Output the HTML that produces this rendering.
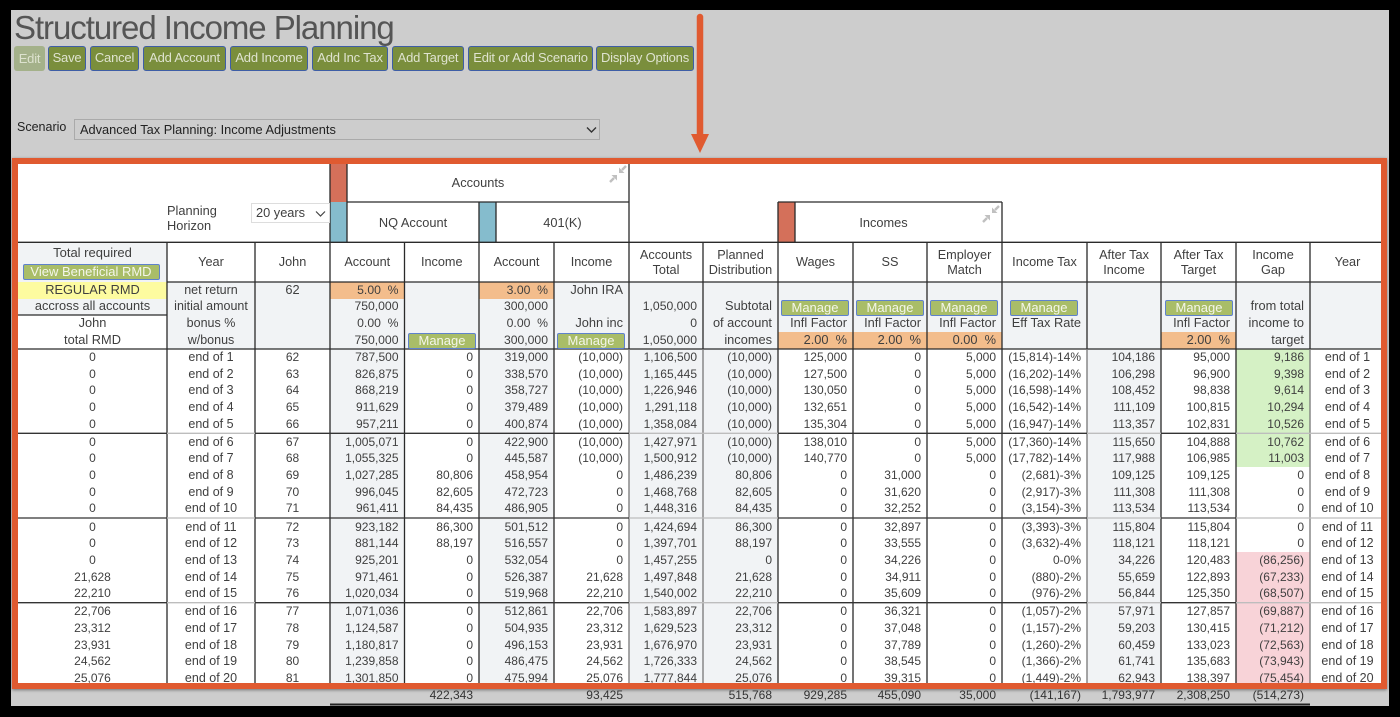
<!DOCTYPE html>
<html><head><meta charset="utf-8"><title>Structured Income Planning</title>
<style>
html,body{margin:0;padding:0;background:#000;width:1400px;height:717px;overflow:hidden}
body{font-family:"Liberation Sans",sans-serif;font-size:12px;color:#3f3f3f;position:relative}
div{box-sizing:border-box}
.a{position:absolute}
#g{position:absolute;left:11px;top:10px;width:1378px;height:696px;background:#cdcdcd}
h1{position:absolute;left:14px;top:10px;margin:0;font-weight:400;font-size:33px;line-height:36px;color:#555;letter-spacing:-1.06px;white-space:nowrap}
.b{position:absolute;top:46px;height:25px;background:#7a8e3c;border:1.5px solid #3e5ea6;border-radius:3px;color:#dfe3d0;font-size:13px;line-height:22px;text-align:center;white-space:nowrap;letter-spacing:-.2px}
.m{position:absolute;height:16px;background:#a9bd68;border:1.5px solid #5f82cc;border-radius:2px;color:#f4f6ea;font-size:13px;line-height:14px;text-align:center;width:68px;z-index:3}
.r{position:absolute;left:18px;width:1367px;height:17px;line-height:16.67px;display:grid;grid-template-columns:149px 88px 75px 74.5px 74.5px 75px 75px 74px 75px 75px 74px 75px 85px 74px 75px 74px 75px;z-index:2;white-space:pre}
.r i{font-style:normal;text-align:right;padding-right:6px;overflow:visible}
.r i:nth-child(1),.r i:nth-child(2),.r i:nth-child(3),.r i:nth-child(17){text-align:center;padding-right:0}
.r i:nth-child(2),.r i:nth-child(17){font-size:12.5px}
.h{top:243px;height:39px;line-height:15px;align-items:center}
.h i{text-align:center!important;padding:0!important;font-size:12.7px!important}
.d i{font-size:12.8px}
.d i:nth-child(4),.d i:nth-child(6),.d i:nth-child(8){font-size:12.2px}
.bg{position:absolute;background:#f1f3f5}
.o{position:absolute;background:#f3bd8c}
.t{position:absolute;text-align:center;z-index:2;font-size:12.8px}
</style></head><body>
<div id="g"></div>
<h1>Structured Income Planning</h1>
<div class="b" style="left:14px;width:31px;background:#a4b18a;border:0;color:#dde2cf;line-height:25px">Edit</div>
<div class="b" style="left:48px;width:38px">Save</div>
<div class="b" style="left:90px;width:49px">Cancel</div>
<div class="b" style="left:143px;width:83px">Add Account</div>
<div class="b" style="left:230px;width:78px">Add Income</div>
<div class="b" style="left:312px;width:76px">Add Inc Tax</div>
<div class="b" style="left:392px;width:72px">Add Target</div>
<div class="b" style="left:468px;width:125px">Edit or Add Scenario</div>
<div class="b" style="left:596px;width:98px">Display Options</div>
<div class="a" style="left:17px;top:120px;color:#222;font-size:12.5px;line-height:15px">Scenario</div>
<div class="a" style="left:74px;top:119px;width:526px;height:21px;background:#cdcdcd;border:1px solid #aaa;color:#222;font-size:12.8px;line-height:20px;padding-left:5px">Advanced Tax Planning: Income Adjustments
<svg class="a" style="left:511px;top:6px" width="11" height="8"><path d="M1 1.5L5.5 6L10 1.5" fill="none" stroke="#333" stroke-width="1.4"/></svg></div>

<svg class="a" style="left:685px;top:10px;z-index:6" width="30" height="150"><path d="M15 7V128" stroke="#e05a30" stroke-width="6.5" stroke-linecap="round"/><path d="M6 124H24L15 143Z" fill="#e05a30"/></svg>

<div class="a" style="left:18px;top:164px;width:1363px;height:519px;background:#fff"></div>
<!-- column shades -->
<div class="bg" style="left:18px;top:243px;width:149px;height:39px"></div>
<div class="bg" style="left:18px;top:282px;width:149px;height:33px"></div>
<div class="a" style="left:18px;top:282px;width:149px;height:16.6px;background:#fdfba0"></div>
<div class="bg" style="left:167px;top:282px;width:163px;height:67px"></div>
<div class="bg" style="left:330px;top:282px;width:1051px;height:67px"></div>
<div class="bg" style="left:330px;top:349px;width:75px;height:334px"></div>
<div class="bg" style="left:479px;top:349px;width:75px;height:334px"></div>
<div class="bg" style="left:629px;top:349px;width:149px;height:334px"></div>
<div class="bg" style="left:1087px;top:349px;width:74px;height:334px"></div>
<div class="a" style="left:1236px;top:349px;width:74px;height:118px;background:#d5f1c5"></div>
<div class="a" style="left:1236px;top:552px;width:74px;height:131px;background:#f8d3d8"></div>
<div class="o" style="left:330px;top:282px;width:74px;height:16.6px"></div>
<div class="o" style="left:479px;top:282px;width:75px;height:16.6px"></div>
<div class="o" style="left:778px;top:332px;width:224px;height:17px"></div>
<div class="o" style="left:1161px;top:332px;width:75px;height:17px"></div>
<!-- color blocks -->
<div class="a" style="left:330px;top:164px;width:17px;height:38px;background:#d4705a"></div>
<div class="a" style="left:330px;top:202px;width:17px;height:40px;background:#85bccd"></div>
<div class="a" style="left:479px;top:202px;width:17px;height:40px;background:#85bccd"></div>
<div class="a" style="left:778px;top:202px;width:17px;height:40px;background:#d4705a"></div>

<svg class="a" style="left:0;top:0;z-index:1" width="1400" height="717" fill="none" stroke-width="1.3">
<path stroke="#2a2a2a" d="M347 202H629M778 202H1002M18 242.300H1381M167 282H1381M18 315H167M18 349H1381M330 164V242M347 164V242M479 202V242M496 202V242M629 164V349M778 202V349M795 202V242M1002 202V349M167 242V683M255 242V683M330 242V683M404.500 242V683M479 242V683M554 242V683M703 242V349M853 242V683M927 242V683M1087 242V349M1161 242V683M1236 242V683M1310 242V349M778 349V683M1002 349V683"/>
<path stroke="#777" d="M629 349V683M703 349V683M1087 349V683M1310 349V683"/>
<path stroke="#333" d="M18 433.300H167M255 433.300H629M778 433.300H1087M1161 433.300H1236M18 518H167M255 518H629M778 518H1087M1161 518H1236M18 602.700H167M255 602.700H629M778 602.700H1087M1161 602.700H1236"/>
<path stroke="#bdbdbd" d="M167 433.300H255M629 433.300H778M1087 433.300H1161M1236 433.300H1381M167 518H255M629 518H778M1087 518H1161M1236 518H1381M167 602.700H255M629 602.700H778M1087 602.700H1161M1236 602.700H1381"/>
<path stroke="#222" stroke-width="2" d="M330 704.500H1310"/>
</svg>

<div class="t" style="left:347px;top:175px;width:262px;line-height:16px">Accounts</div>
<div class="t" style="left:347px;top:215px;width:132px;line-height:16px">NQ Account</div>
<div class="t" style="left:496px;top:215px;width:133px;line-height:16px">401(K)</div>
<div class="t" style="left:795px;top:215px;width:177px;line-height:16px">Incomes</div>
<svg class="a" style="left:609px;top:165px;z-index:2" width="18" height="18"><path d="M17 1L13 5M1 17L5 13" stroke="#c0c0c0" stroke-width="2.400"/><path d="M10 8V2.500L15.500 8ZM8 10H2.500L8 15.500Z" fill="#c0c0c0"/></svg>
<svg class="a" style="left:982px;top:205px;z-index:2" width="18" height="18"><path d="M17 1L13 5M1 17L5 13" stroke="#c0c0c0" stroke-width="2.400"/><path d="M10 8V2.500L15.500 8ZM8 10H2.500L8 15.500Z" fill="#c0c0c0"/></svg>

<div class="a" style="left:167px;top:203px;line-height:15px;z-index:2;font-size:12.8px">Planning<br>Horizon</div>
<div class="a" style="left:251px;top:203px;width:79px;height:20px;background:#fff;border:1px solid #ddd;line-height:18px;padding-left:4px;font-size:12.800px;z-index:2">20 years<svg class="a" style="left:63px;top:6px" width="11" height="8"><path d="M1 1.500L5.500 6L10 1.500" fill="none" stroke="#444" stroke-width="1.200"/></svg></div>

<div class="t" style="left:18px;top:245px;width:149px;line-height:15px;font-size:13px">Total required</div>
<div class="m" style="left:22.500px;top:264px;width:137px">View Beneficial RMD</div>
<div class="m" style="left:408px;top:333px">Manage</div>
<div class="m" style="left:557px;top:333px">Manage</div>
<div class="m" style="left:781px;top:299.500px">Manage</div>
<div class="m" style="left:856px;top:299.500px">Manage</div>
<div class="m" style="left:930px;top:299.500px">Manage</div>
<div class="m" style="left:1010px;top:299.500px">Manage</div>
<div class="m" style="left:1165px;top:299.500px">Manage</div>

<div class="r h"><i></i><i>Year</i><i>John</i><i>Account</i><i>Income</i><i>Account</i><i>Income</i><i>Accounts<br>Total</i><i>Planned<br>Distribution</i><i>Wages</i><i>SS</i><i>Employer<br>Match</i><i>Income Tax</i><i>After Tax<br>Income</i><i>After Tax<br>Target</i><i>Income<br>Gap</i><i>Year</i></div>

<div class="r d" style="top:281.700px"><i>REGULAR RMD</i><i>net return</i><i>62</i><i>5.00  %</i><i></i><i>3.00  %</i><i>John IRA</i><i></i><i></i><i></i><i></i><i></i><i></i><i></i><i></i><i></i><i></i></div>
<div class="r d" style="top:298.400px"><i>accross all accounts</i><i>initial amount</i><i></i><i>750,000</i><i></i><i>300,000</i><i></i><i>1,050,000</i><i>Subtotal</i><i></i><i></i><i></i><i></i><i></i><i></i><i>from total</i><i></i></div>
<div class="r d" style="top:315.100px"><i>John</i><i>bonus %</i><i></i><i>0.00  %</i><i></i><i>0.00  %</i><i>John inc</i><i>0</i><i>of account</i><i>Infl Factor</i><i>Infl Factor</i><i>Infl Factor</i><i>Eff Tax Rate</i><i></i><i>Infl Factor</i><i>income to</i><i></i></div>
<div class="r d" style="top:331.800px"><i>total RMD</i><i>w/bonus</i><i></i><i>750,000</i><i></i><i>300,000</i><i></i><i>1,050,000</i><i>incomes</i><i>2.00  %</i><i>2.00  %</i><i>0.00  %</i><i></i><i></i><i>2.00  %</i><i>target</i><i></i></div>

<div class="r" style="top:349px"><i>0</i><i>end of 1</i><i>62</i><i>787,500</i><i>0</i><i>319,000</i><i>(10,000)</i><i>1,106,500</i><i>(10,000)</i><i>125,000</i><i>0</i><i>5,000</i><i>(15,814)-14%</i><i>104,186</i><i>95,000</i><i>9,186</i><i>end of 1</i></div>
<div class="r" style="top:365.670px"><i>0</i><i>end of 2</i><i>63</i><i>826,875</i><i>0</i><i>338,570</i><i>(10,000)</i><i>1,165,445</i><i>(10,000)</i><i>127,500</i><i>0</i><i>5,000</i><i>(16,202)-14%</i><i>106,298</i><i>96,900</i><i>9,398</i><i>end of 2</i></div>
<div class="r" style="top:382.340px"><i>0</i><i>end of 3</i><i>64</i><i>868,219</i><i>0</i><i>358,727</i><i>(10,000)</i><i>1,226,946</i><i>(10,000)</i><i>130,050</i><i>0</i><i>5,000</i><i>(16,598)-14%</i><i>108,452</i><i>98,838</i><i>9,614</i><i>end of 3</i></div>
<div class="r" style="top:399.010px"><i>0</i><i>end of 4</i><i>65</i><i>911,629</i><i>0</i><i>379,489</i><i>(10,000)</i><i>1,291,118</i><i>(10,000)</i><i>132,651</i><i>0</i><i>5,000</i><i>(16,542)-14%</i><i>111,109</i><i>100,815</i><i>10,294</i><i>end of 4</i></div>
<div class="r" style="top:415.680px"><i>0</i><i>end of 5</i><i>66</i><i>957,211</i><i>0</i><i>400,874</i><i>(10,000)</i><i>1,358,084</i><i>(10,000)</i><i>135,304</i><i>0</i><i>5,000</i><i>(16,947)-14%</i><i>113,357</i><i>102,831</i><i>10,526</i><i>end of 5</i></div>
<div class="r" style="top:433.750px"><i>0</i><i>end of 6</i><i>67</i><i>1,005,071</i><i>0</i><i>422,900</i><i>(10,000)</i><i>1,427,971</i><i>(10,000)</i><i>138,010</i><i>0</i><i>5,000</i><i>(17,360)-14%</i><i>115,650</i><i>104,888</i><i>10,762</i><i>end of 6</i></div>
<div class="r" style="top:450.420px"><i>0</i><i>end of 7</i><i>68</i><i>1,055,325</i><i>0</i><i>445,587</i><i>(10,000)</i><i>1,500,912</i><i>(10,000)</i><i>140,770</i><i>0</i><i>5,000</i><i>(17,782)-14%</i><i>117,988</i><i>106,985</i><i>11,003</i><i>end of 7</i></div>
<div class="r" style="top:467.090px"><i>0</i><i>end of 8</i><i>69</i><i>1,027,285</i><i>80,806</i><i>458,954</i><i>0</i><i>1,486,239</i><i>80,806</i><i>0</i><i>31,000</i><i>0</i><i>(2,681)-3%</i><i>109,125</i><i>109,125</i><i>0</i><i>end of 8</i></div>
<div class="r" style="top:483.760px"><i>0</i><i>end of 9</i><i>70</i><i>996,045</i><i>82,605</i><i>472,723</i><i>0</i><i>1,468,768</i><i>82,605</i><i>0</i><i>31,620</i><i>0</i><i>(2,917)-3%</i><i>111,308</i><i>111,308</i><i>0</i><i>end of 9</i></div>
<div class="r" style="top:500.430px"><i>0</i><i>end of 10</i><i>71</i><i>961,411</i><i>84,435</i><i>486,905</i><i>0</i><i>1,448,316</i><i>84,435</i><i>0</i><i>32,252</i><i>0</i><i>(3,154)-3%</i><i>113,534</i><i>113,534</i><i>0</i><i>end of 10</i></div>
<div class="r" style="top:518.500px"><i>0</i><i>end of 11</i><i>72</i><i>923,182</i><i>86,300</i><i>501,512</i><i>0</i><i>1,424,694</i><i>86,300</i><i>0</i><i>32,897</i><i>0</i><i>(3,393)-3%</i><i>115,804</i><i>115,804</i><i>0</i><i>end of 11</i></div>
<div class="r" style="top:535.170px"><i>0</i><i>end of 12</i><i>73</i><i>881,144</i><i>88,197</i><i>516,557</i><i>0</i><i>1,397,701</i><i>88,197</i><i>0</i><i>33,555</i><i>0</i><i>(3,632)-4%</i><i>118,121</i><i>118,121</i><i>0</i><i>end of 12</i></div>
<div class="r" style="top:551.840px"><i>0</i><i>end of 13</i><i>74</i><i>925,201</i><i>0</i><i>532,054</i><i>0</i><i>1,457,255</i><i>0</i><i>0</i><i>34,226</i><i>0</i><i>0-0%</i><i>34,226</i><i>120,483</i><i>(86,256)</i><i>end of 13</i></div>
<div class="r" style="top:568.510px"><i>21,628</i><i>end of 14</i><i>75</i><i>971,461</i><i>0</i><i>526,387</i><i>21,628</i><i>1,497,848</i><i>21,628</i><i>0</i><i>34,911</i><i>0</i><i>(880)-2%</i><i>55,659</i><i>122,893</i><i>(67,233)</i><i>end of 14</i></div>
<div class="r" style="top:585.180px"><i>22,210</i><i>end of 15</i><i>76</i><i>1,020,034</i><i>0</i><i>519,968</i><i>22,210</i><i>1,540,002</i><i>22,210</i><i>0</i><i>35,609</i><i>0</i><i>(976)-2%</i><i>56,844</i><i>125,350</i><i>(68,507)</i><i>end of 15</i></div>
<div class="r" style="top:603.250px"><i>22,706</i><i>end of 16</i><i>77</i><i>1,071,036</i><i>0</i><i>512,861</i><i>22,706</i><i>1,583,897</i><i>22,706</i><i>0</i><i>36,321</i><i>0</i><i>(1,057)-2%</i><i>57,971</i><i>127,857</i><i>(69,887)</i><i>end of 16</i></div>
<div class="r" style="top:619.920px"><i>23,312</i><i>end of 17</i><i>78</i><i>1,124,587</i><i>0</i><i>504,935</i><i>23,312</i><i>1,629,523</i><i>23,312</i><i>0</i><i>37,048</i><i>0</i><i>(1,157)-2%</i><i>59,203</i><i>130,415</i><i>(71,212)</i><i>end of 17</i></div>
<div class="r" style="top:636.590px"><i>23,931</i><i>end of 18</i><i>79</i><i>1,180,817</i><i>0</i><i>496,153</i><i>23,931</i><i>1,676,970</i><i>23,931</i><i>0</i><i>37,789</i><i>0</i><i>(1,260)-2%</i><i>60,459</i><i>133,023</i><i>(72,563)</i><i>end of 18</i></div>
<div class="r" style="top:653.260px"><i>24,562</i><i>end of 19</i><i>80</i><i>1,239,858</i><i>0</i><i>486,475</i><i>24,562</i><i>1,726,333</i><i>24,562</i><i>0</i><i>38,545</i><i>0</i><i>(1,366)-2%</i><i>61,741</i><i>135,683</i><i>(73,943)</i><i>end of 19</i></div>
<div class="r" style="top:669.930px"><i>25,076</i><i>end of 20</i><i>81</i><i>1,301,850</i><i>0</i><i>475,994</i><i>25,076</i><i>1,777,844</i><i>25,076</i><i>0</i><i>39,315</i><i>0</i><i>(1,449)-2%</i><i>62,943</i><i>138,397</i><i>(75,454)</i><i>end of 20</i></div>

<div class="a" style="left:12px;top:158px;width:1375px;height:531px;border:6px solid #e05a30;z-index:5;box-shadow:0 1px 3px rgba(0,0,0,.45)"></div>
<div class="r" style="top:687px;color:#333;z-index:6"><i></i><i></i><i></i><i></i><i>422,343</i><i></i><i>93,425</i><i></i><i>515,768</i><i>929,285</i><i>455,090</i><i>35,000</i><i>(141,167)</i><i>1,793,977</i><i>2,308,250</i><i>(514,273)</i><i></i></div>
</body></html>
